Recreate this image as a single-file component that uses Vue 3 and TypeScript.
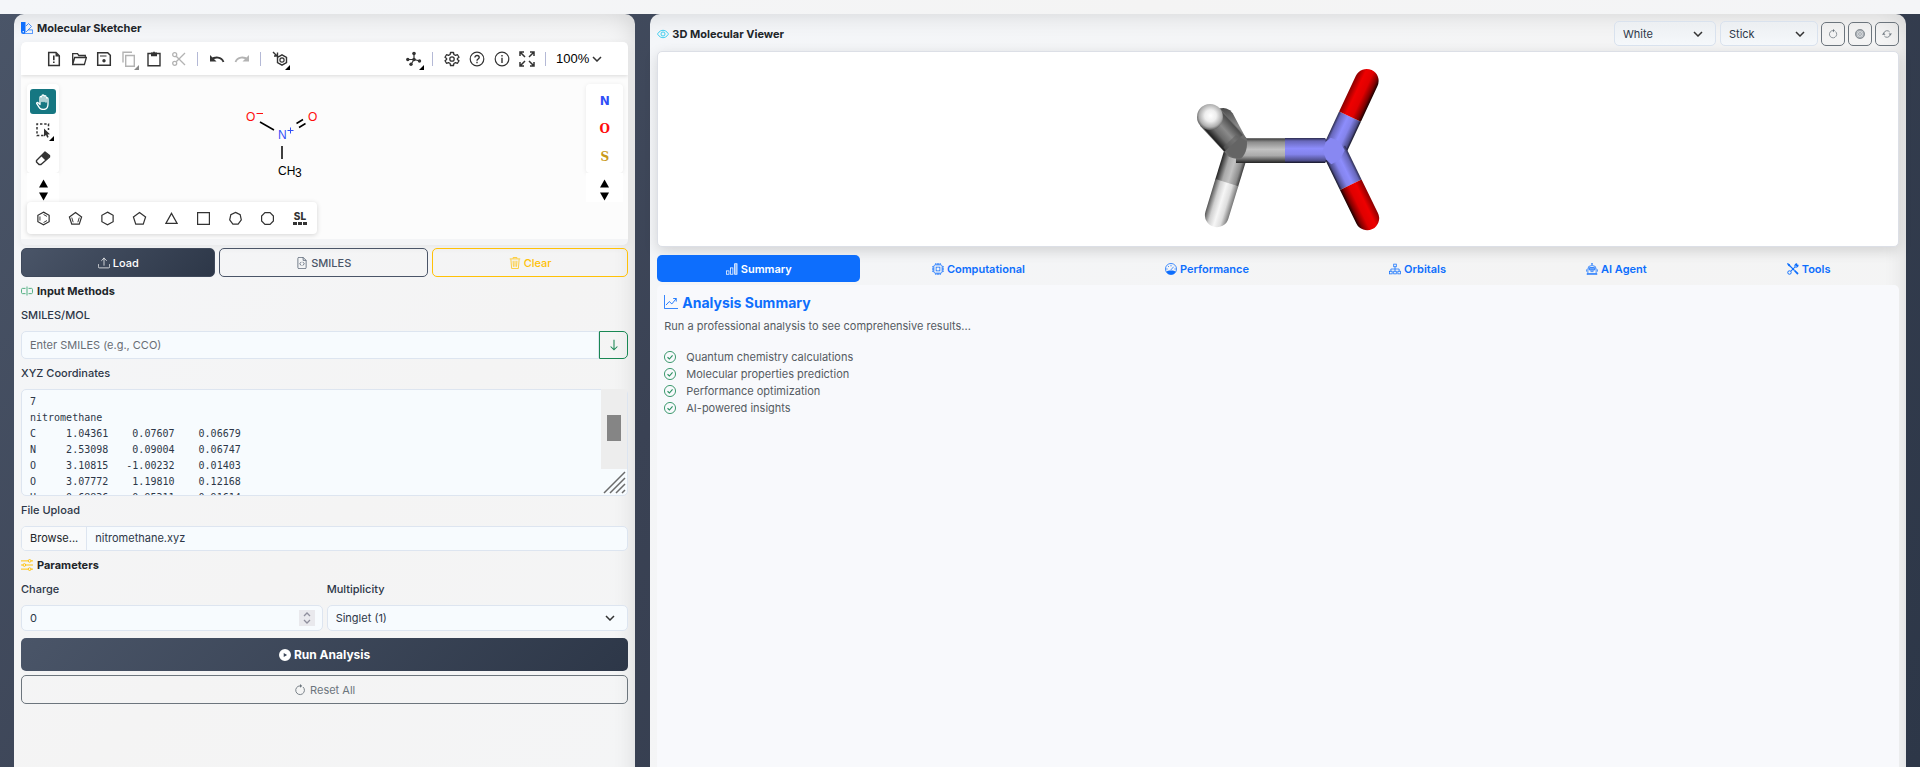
<script setup lang="ts">
import { ref } from 'vue'

const smiles = ref('')
const xyz = ref(
  [
    '7',
    'nitromethane',
    'C     1.04361    0.07607    0.06679',
    'N     2.53098    0.09004    0.06747',
    'O     3.10815   -1.00232    0.01403',
    'O     3.07772    1.19810    0.12168',
    'H     0.68836    0.95311    0.91614',
    'H     0.69211    1.01240   -0.35170',
    'H     0.71002   -0.77120   -0.53060',
  ].join('\n'),
)
const charge = ref(0)
const multiplicity = ref('Singlet (1)')
const background = ref('White')
const display = ref('Stick')
const fileName = ref('nitromethane.xyz')
const activeTab = ref('Summary')

const tabs = [
  { name: 'Summary', icon: 'bars' },
  { name: 'Computational', icon: 'cpu' },
  { name: 'Performance', icon: 'gauge' },
  { name: 'Orbitals', icon: 'tree' },
  { name: 'AI Agent', icon: 'robot' },
  { name: 'Tools', icon: 'tools' },
]
const features = [
  'Quantum chemistry calculations',
  'Molecular properties prediction',
  'Performance optimization',
  'AI-powered insights',
]
const fileTools = [
  { name: 'New', icon: 'k-new' },
  { name: 'Open', icon: 'k-open' },
  { name: 'Save', icon: 'k-save' },
  { name: 'Copy', icon: 'k-copy', dim: true, more: true },
  { name: 'Paste', icon: 'k-paste' },
  { name: 'Cut', icon: 'k-cut', dim: true },
]
const viewTools = [
  { name: 'Settings', icon: 'k-gear' },
  { name: 'Help', icon: 'k-help' },
  { name: 'About', icon: 'k-info' },
  { name: 'Fullscreen', icon: 'k-full' },
]
const rings = [
  { name: 'Benzene', icon: 'r-benzene' },
  { name: 'Cyclopentadiene', icon: 'r-diene' },
  { name: 'Cyclohexane', icon: 'r-hex' },
  { name: 'Cyclopentane', icon: 'r-pent' },
  { name: 'Cyclopropane', icon: 'r-tri' },
  { name: 'Cyclobutane', icon: 'r-square' },
  { name: 'Cycloheptane', icon: 'r-hept' },
  { name: 'Cyclooctane', icon: 'r-oct' },
]
const atoms = ['N', 'O', 'S']

function pickFile(e: Event) {
  const f = (e.target as HTMLInputElement).files?.[0]
  if (f) fileName.value = f.name
}
function resetAll() {
  smiles.value = ''
  charge.value = 0
}
</script>

<template>
  <svg class="sprite" aria-hidden="true">
    <symbol id="palette" viewBox="0 0 16 16"><path fill="currentColor" d="M0 0h6v13a3 3 0 0 1-6 0z" /><path fill="none" stroke="currentColor" d="M6.5 5.5 10 2l4 4-7.5 7.500M9.500 10.500H15.500v5H3.500" /><circle cx="3" cy="13" r="1" fill="#fff" /></symbol>
    <symbol id="upload" viewBox="0 0 16 16"><path fill="none" stroke="currentColor" stroke-linecap="round" d="M.5 10v3a1.500 1.500 0 0 0 1.500 1.500h12a1.500 1.500 0 0 0 1.500-1.500v-3M8 11V1.500M4.800 4.700 8 1.500l3.200 3.200" /></symbol>
    <symbol id="filecode" viewBox="0 0 16 16"><path fill="none" stroke="currentColor" d="M9.500.5H4A1.500 1.500 0 0 0 2.500 2v12A1.500 1.500 0 0 0 4 15.500h8a1.500 1.500 0 0 0 1.500-1.500V4.500zV4.500h4M7 6.500 5 9l2 2.500M9 6.500 11 9l-2 2.500" /></symbol>
    <symbol id="trash" viewBox="0 0 16 16"><path fill="none" stroke="currentColor" d="M1 2.500h14M5.500 2V.7h5V2M2.500 3l1 12.300h9L13.500 3M5.500 5l.4 8M8 5v8M10.500 5l-.4 8" /></symbol>
    <symbol id="cursor" viewBox="0 0 16 16"><path fill="none" stroke="currentColor" stroke-width="1.300" d="M6 4.500H2A1.500 1.500 0 0 0 .7 6v4A1.500 1.500 0 0 0 2 11.500h4M10 4.500h4A1.500 1.500 0 0 1 15.300 6v4a1.500 1.500 0 0 1-1.300 1.500h-4M8 2v12" /></symbol>
    <symbol id="sliders" viewBox="0 0 16 16"><g fill="none" stroke="currentColor" stroke-width="1.300"><circle cx="11.500" cy="2.500" r="1.800" /><circle cx="4.500" cy="8" r="1.800" /><circle cx="11.500" cy="13.500" r="1.800" /><path d="M0 2.500h9.700M13.300 2.500H16M0 8h2.700M6.300 8H16M0 13.500h9.700M13.300 13.500H16" /></g></symbol>
    <symbol id="play" viewBox="0 0 16 16"><path fill="currentColor" fill-rule="evenodd" d="M8 0a8 8 0 1 0 0 16A8 8 0 0 0 8 0M6.300 5.200v5.600L10.800 8z" /></symbol>
    <symbol id="clockwise" viewBox="0 0 16 16"><path fill="none" stroke="currentColor" stroke-width="1.200" d="M12 4A5.800 5.800 0 1 1 8 2.500" /><path fill="currentColor" d="M8 0v5L11 2.500z" /></symbol>
    <symbol id="target" viewBox="0 0 16 16"><circle cx="8" cy="8" r="7.500" fill="currentColor" fill-opacity=".55" /><g fill="none" stroke="currentColor"><circle cx="8" cy="8" r="7.300" /><circle cx="8" cy="8" r="4" stroke="#eef0f2" /><path d="m3 3 10 10M13 3 3 13" stroke="#dfe2e5" stroke-width=".8" /></g></symbol>
    <symbol id="repeat" viewBox="0 0 16 16"><path fill="none" stroke="currentColor" stroke-width="1.300" d="M3 6.500A5.300 5.300 0 0 1 12.300 4.800M13 9.500A5.300 5.300 0 0 1 3.700 11.200" /><path fill="currentColor" d="M10.500 7H16l-2.700 3.500zM5.500 9H0l2.700-3.500z" /></symbol>
    <symbol id="eye" viewBox="0 0 16 16"><g fill="none" stroke="currentColor" stroke-width="1.200"><path d="M.7 8S3.300 3 8 3s7.300 5 7.300 5-2.600 5-7.300 5S.7 8 .7 8z" /><circle cx="8" cy="8" r="2.700" /></g></symbol>
    <symbol id="bars" viewBox="0 0 16 16"><g fill="none" stroke="currentColor"><rect x=".8" y="10.500" width="3.200" height="4.500" /><rect x="6" y="6.500" width="3.200" height="8.500" /><rect x="11.500" y="1" width="3.200" height="14" fill="currentColor" fill-opacity=".5" /></g></symbol>
    <symbol id="cpu" viewBox="0 0 16 16"><g fill="none" stroke="currentColor"><rect x="2.500" y="2.500" width="11" height="11" rx="2" /><rect x="5.500" y="5.500" width="5" height="5" /><path d="M5 0v2.500M7 0v2.500M9 0v2.500M11 0v2.500M5 13.500V16M7 13.500V16M9 13.500V16M11 13.500V16M0 5h2.500M0 7h2.500M0 9h2.500M0 11h2.500M13.500 5H16M13.500 7H16M13.500 9H16M13.500 11H16" /></g></symbol>
    <symbol id="gauge" viewBox="0 0 16 16"><circle cx="8" cy="8" r="7.400" fill="none" stroke="currentColor" /><path fill="currentColor" d="M1.500 11.500C4 9.500 12 9.500 14.500 11.500A7.500 7.500 0 0 1 1.500 11.500z" /><path fill="none" stroke="currentColor" d="M8 2.500v2M3.500 8h-2M14.500 8h-2M4 4l1.300 1.300M7.500 9.500 11.500 5" /></symbol>
    <symbol id="tree" viewBox="0 0 16 16"><g fill="none" stroke="currentColor"><rect x="6.300" y="1.500" width="3.400" height="3.500" /><rect x=".8" y="11" width="3.400" height="3.500" /><rect x="6.300" y="11" width="3.400" height="3.500" /><rect x="11.800" y="11" width="3.400" height="3.500" /><path d="M8 5v6M2.500 11V8h11v3" /></g></symbol>
    <symbol id="robot" viewBox="0 0 16 16"><g fill="none" stroke="currentColor"><path d="M8 3V1M2.500 13.500V8A4.500 4.500 0 0 1 7 3.500h2A4.500 4.500 0 0 1 13.500 8v5.500M.5 8.500v3M15.500 8.500v3M1.500 15.500v-1.500h13v1.500zM6 11.500h4" /><rect x="4" y="6" width="8" height="3.500" rx="1.500" fill="currentColor" fill-opacity=".6" /></g><circle cx="8" cy="1" r="1" fill="currentColor" /></symbol>
    <symbol id="tools" viewBox="0 0 16 16"><path fill="none" stroke="currentColor" stroke-width="1.500" d="M2 2l8 8" /><path fill="currentColor" d="M0 1 1 0l3 2 .3 1.700L3.500 4.500 2 4zM9.300 10.800l1.500-1.500 4.700 4.500-1.700 1.700z" /><path fill="none" stroke="currentColor" stroke-width="1.400" d="M5.200 10.800 11 5M10.800 5.200A2.700 2.700 0 0 1 13.500 1.200M10.800 5.200A2.700 2.700 0 0 0 14.800 2.500M13.500 1.200 12 2.800l1.200 1.200 1.600-1.500" /><circle cx="3.300" cy="12.700" r="2.300" fill="none" stroke="currentColor" stroke-width="1.300" /></symbol>
    <symbol id="graph" viewBox="0 0 16 16"><path fill="none" stroke="currentColor" d="M.5 0v15.500H16M2.300 11.500 6 7.500l3 2.700 5-6.200M10.500 4H14v3.500" /></symbol>
    <symbol id="check" viewBox="0 0 16 16"><circle cx="8" cy="8" r="7.400" fill="none" stroke="currentColor" stroke-width="1.200" /><path fill="none" stroke="currentColor" stroke-width="1.500" d="m4.700 8.300 2.500 2.400 4.200-5" /></symbol>
    <symbol id="down" viewBox="0 0 16 16"><path fill="none" stroke="currentColor" stroke-width="1.400" d="M8 1v13.500M3.500 10 8 14.500 12.500 10" /></symbol>

    <symbol id="k-new" viewBox="0 0 16 16"><path fill="none" stroke="currentColor" stroke-width="1.500" d="M10 1.500H2.700v13h10.600V4.800z" /><path fill="currentColor" d="M9.500 1.500v4h4zM7 4.500h1.600v4.700H7zM7 10.500h1.600v1.600H7z" /></symbol>
    <symbol id="k-open" viewBox="0 0 16 16"><path fill="none" stroke="currentColor" stroke-width="1.300" d="M1.700 13.500V2.700h4.800l1.300 1.800h6.500v2M1.700 13.500 3.700 6.500h11.700l-2 7z" /></symbol>
    <symbol id="k-save" viewBox="0 0 16 16"><path fill="none" stroke="currentColor" stroke-width="1.500" d="M1.700 1.700h10l2.600 2.600v10H1.700z" /><path fill="none" stroke="currentColor" stroke-width="1.200" d="M4 5h6.500" /><circle cx="8" cy="9.700" r="1.700" fill="currentColor" /></symbol>
    <symbol id="k-copy" viewBox="0 0 16 16"><path fill="none" stroke="currentColor" stroke-width="1.400" d="M4.700 4.500h8.600v10.800H4.700zM2 11.500V1.200h9" /></symbol>
    <symbol id="k-paste" viewBox="0 0 16 16"><path fill="none" stroke="currentColor" stroke-width="1.400" d="M2 2.500h12v12.300H2z" /><path fill="currentColor" d="M5 1.500h2L8 .2l1 1.300h2v3.700H5z" /></symbol>
    <symbol id="k-cut" viewBox="0 0 16 16"><g fill="none" stroke="currentColor" stroke-width="1.300"><circle cx="3.700" cy="3.700" r="2" /><circle cx="3.700" cy="12.300" r="2" /><path d="M5.200 5.200 14 14M5.200 10.800 14 2" /></g></symbol>
    <symbol id="k-undo" viewBox="0 0 16 16"><path fill="none" stroke="currentColor" stroke-width="1.800" d="M2 8.500C6 5.500 12.500 5.500 14.500 11" /><path fill="currentColor" d="M1 4v6.500h6.500z" /></symbol>
    <symbol id="k-layout" viewBox="0 0 16 16"><path fill="none" stroke="currentColor" stroke-width="1.400" d="M1 1l4 4M5.500 1.500V5H2M10 3.800l4.500 2.600v5.200L10 14.200l-4.500-2.600V6.400z" /><circle cx="10" cy="9" r="2.100" fill="none" stroke="currentColor" stroke-width="1.200" /></symbol>
    <symbol id="k-mol" viewBox="0 0 16 16"><path fill="none" stroke="currentColor" stroke-width="1.200" d="M8 2v6.500M1.500 8.500H8l6 1.500M8 8.500l-3 5" /><g fill="currentColor"><circle cx="8" cy="2.500" r="1.800" /><circle cx="8" cy="8.500" r="1.800" /><circle cx="1.800" cy="8.500" r="1.700" /><circle cx="13.500" cy="10" r="1.700" /><circle cx="5" cy="13.300" r="1.700" /></g></symbol>
    <symbol id="k-gear" viewBox="0 0 16 16"><path fill="none" stroke="currentColor" stroke-width="1.300" stroke-linejoin="round" d="M6.500 1.500h3l.4 2 1.600.9 2-.7 1.500 2.600L13.400 7.600v.8l1.600 1.300-1.500 2.600-2-.7-1.600.9-.4 2h-3l-.4-2-1.600-.9-2 .7L1 9.700l1.600-1.300v-.8L1 6.300l1.500-2.600 2 .7 1.600-.9z" /><circle cx="8" cy="8" r="2.200" fill="none" stroke="currentColor" stroke-width="1.300" /></symbol>
    <symbol id="k-help" viewBox="0 0 16 16"><circle cx="8" cy="8" r="6.800" fill="none" stroke="currentColor" stroke-width="1.200" /><path fill="none" stroke="currentColor" stroke-width="1.400" d="M5.900 6.500C5.900 3.800 10.200 4 10.200 6.400 10.200 8 8 8 8 9.700M8 10.800v1.500" /></symbol>
    <symbol id="k-info" viewBox="0 0 16 16"><circle cx="8" cy="8" r="6.800" fill="none" stroke="currentColor" stroke-width="1.200" /><path stroke="currentColor" stroke-width="1.400" d="M8 6.700V12M8 4v1.500" /></symbol>
    <symbol id="k-full" viewBox="0 0 16 16"><path fill="none" stroke="currentColor" stroke-width="1.500" d="M1 5V1h4M1 1l5 5M11 1h4v4M15 1l-5 5M1 11v4h4M1 15l5-5M15 11v4h-4M15 15l-5-5" /></symbol>
    <symbol id="k-hand" viewBox="0 0 16 16"><path fill="none" stroke="currentColor" stroke-width="1.300" stroke-linejoin="round" stroke-linecap="round" d="M5 9V3.500a1 1 0 0 1 2 0V7.500 2a1 1 0 0 1 2 0v5.500V2.700a1 1 0 0 1 2 0V8 4.700a1 1 0 0 1 2 0V10c0 3.500-2 5.500-4.700 5.500-3 0-4-1.500-6.500-5.800-.5-1 .8-1.600 1.500-.8L5 10.500z" /></symbol>
    <symbol id="k-select" viewBox="0 0 16 16"><path fill="none" stroke="currentColor" stroke-width="1.500" stroke-dasharray="2.400 1.800" d="M8.500 13.500h-6.500V2h11.500v6" /><path fill="currentColor" d="M9 6.500v8l2-1.500 1.200 2.800 1.500-.7-1.200-2.600 2.500-.3z" /></symbol>
    <symbol id="k-erase" viewBox="0 0 16 16"><path fill="none" stroke="currentColor" stroke-width="1.400" stroke-linejoin="round" d="M1.500 10.500 10 2l4.500 3.500v1.500L6 14.500H4L1.500 12z" /><path fill="currentColor" d="M6 6 10 2l4.700 4-4.200 4.500z" /></symbol>
    <symbol id="r-benzene" viewBox="0 0 16 16"><path fill="none" stroke="currentColor" stroke-width="1.300" d="M8 1.200 14 4.600v6.800L8 14.800 2 11.400V4.600z" /><path fill="none" stroke="currentColor" d="M8 3.700 11.700 5.800M11.700 10.200 8 12.300M4.200 5.800v4.400" /></symbol>
    <symbol id="r-diene" viewBox="0 0 16 16"><path fill="none" stroke="currentColor" stroke-width="1.300" d="M8 1.500 14.500 6.300 12 14H4L1.500 6.300z" /><path fill="none" stroke="currentColor" d="M4 7l1.500 5M12 7l-1.500 5" /></symbol>
    <symbol id="r-hex" viewBox="0 0 16 16"><path fill="none" stroke="currentColor" stroke-width="1.300" d="M8 1.200 14 4.600v6.800L8 14.800 2 11.400V4.600z" /></symbol>
    <symbol id="r-pent" viewBox="0 0 16 16"><path fill="none" stroke="currentColor" stroke-width="1.300" d="M8 1.500 14.500 6.300 12 14H4L1.500 6.300z" /></symbol>
    <symbol id="r-tri" viewBox="0 0 16 16"><path fill="none" stroke="currentColor" stroke-width="1.300" d="M8 2.500 14 13.300H2z" /></symbol>
    <symbol id="r-square" viewBox="0 0 16 16"><path fill="none" stroke="currentColor" stroke-width="1.300" d="M1.700 1.700h12.600v12.600H1.700z" /></symbol>
    <symbol id="r-hept" viewBox="0 0 16 16"><path fill="none" stroke="currentColor" stroke-width="1.300" d="M8 1.500 13 4l1.200 5.400L10.800 14H5.200L1.800 9.400 3 4z" /></symbol>
    <symbol id="r-oct" viewBox="0 0 16 16"><path fill="none" stroke="currentColor" stroke-width="1.300" d="M5.300 1.700h5.400l3.600 3.600v5.400l-3.600 3.600H5.300l-3.600-3.600V5.300z" /></symbol>
  </svg>

  <div class="page">
    <div class="topbar"></div>
    <main class="workspace">
      <section class="panel left">
        <h2 class="title"><svg class="ic blue"><use href="#palette" /></svg>Molecular Sketcher</h2>

        <div class="editor">
          <div class="toolbar">
            <div class="group">
              <button v-for="t in fileTools" :key="t.name" class="tool" :class="{ dim: t.dim, more: t.more }" :aria-label="t.name">
                <svg class="k"><use :href="'#' + t.icon" /></svg>
              </button>
              <i class="sep"></i>
              <button class="tool" aria-label="Undo"><svg class="k"><use href="#k-undo" /></svg></button>
              <button class="tool dim" aria-label="Redo"><svg class="k flip"><use href="#k-undo" /></svg></button>
              <i class="sep"></i>
              <button class="tool more" aria-label="Layout"><svg class="k"><use href="#k-layout" /></svg></button>
            </div>
            <div class="group">
              <button class="tool more" aria-label="3D viewer"><svg class="k"><use href="#k-mol" /></svg></button>
              <i class="sep"></i>
              <button v-for="t in viewTools" :key="t.name" class="tool" :aria-label="t.name">
                <svg class="k"><use :href="'#' + t.icon" /></svg>
              </button>
              <i class="sep"></i>
              <button class="zoom">100%<svg class="caret" viewBox="0 0 10 6"><path d="m1 1 4 4 4-4" /></svg></button>
            </div>
          </div>

          <div class="canvas">
            <div class="side">
              <div class="rail">
                <button class="mode on" aria-label="Hand"><svg class="k"><use href="#k-hand" /></svg></button>
                <button class="mode more" aria-label="Select"><svg class="k"><use href="#k-select" /></svg></button>
                <button class="mode" aria-label="Erase"><svg class="k"><use href="#k-erase" /></svg></button>
              </div>
              <div class="arrows">
                <button aria-label="Scroll tools up"><svg viewBox="0 0 10 9"><path d="M5 0l5 9H0z" /></svg></button>
                <button aria-label="Scroll tools down"><svg viewBox="0 0 10 9"><path d="M5 9l5-9H0z" /></svg></button>
              </div>
            </div>
            <svg class="formula" viewBox="240 105 90 80" role="img" aria-label="Nitromethane structure">
              <path d="M260 122l14 8M296.500 123.500l6.500-4M299 127.500l6.500-4M282 146v13" />
              <text x="246" y="121" class="o">O</text>
              <path class="om" d="M256.500 113.500h6.500" />
              <text x="308" y="121" class="o">O</text>
              <text x="278" y="139" class="n">N</text>
              <path class="nm" d="M287.500 130.500h6M290.500 127.500v6" />
              <text x="278" y="175">CH</text><text x="295" y="177">3</text>
            </svg>
            <div class="side">
              <div class="rail atoms">
                <button v-for="a in atoms" :key="a" class="atom" :class="a">{{ a }}</button>
              </div>
              <div class="arrows">
                <button aria-label="Scroll atoms up"><svg viewBox="0 0 10 9"><path d="M5 0l5 9H0z" /></svg></button>
                <button aria-label="Scroll atoms down"><svg viewBox="0 0 10 9"><path d="M5 9l5-9H0z" /></svg></button>
              </div>
            </div>
            <div class="rings">
              <button v-for="r in rings" :key="r.name" :aria-label="r.name"><svg class="k"><use :href="'#' + r.icon" /></svg></button>
              <button class="sl">SL<i></i></button>
            </div>
          </div>
        </div>

        <div class="actions">
          <button class="btn dark"><svg class="ic"><use href="#upload" /></svg>Load</button>
          <button class="btn slate"><svg class="ic"><use href="#filecode" /></svg>SMILES</button>
          <button class="btn amber"><svg class="ic"><use href="#trash" /></svg>Clear</button>
        </div>

        <h2 class="title"><svg class="ic green"><use href="#cursor" /></svg>Input Methods</h2>

        <label class="label" for="smiles">SMILES/MOL</label>
        <div class="row field">
          <input id="smiles" v-model="smiles" class="control joined" type="text" placeholder="Enter SMILES (e.g., CCO)" />
          <button class="go" aria-label="Load SMILES"><svg class="ic"><use href="#down" /></svg></button>
        </div>

        <label class="label" for="xyz">XYZ Coordinates</label>
        <div class="area field">
          <textarea id="xyz" v-model="xyz" spellcheck="false"></textarea>
          <div class="bar"><i></i></div>
          <svg class="grip" viewBox="0 0 26 26"><path d="M3 24 24 3M9 24 24 9M15 24l9-9M21 24l3-3" /></svg>
        </div>

        <label class="label" for="file">File Upload</label>
        <label class="file"><span class="browse">Browse...</span><span>{{ fileName }}</span><input id="file" type="file" @change="pickFile" /></label>

        <h2 class="title"><svg class="ic yellow"><use href="#sliders" /></svg>Parameters</h2>

        <div class="params">
          <div>
            <label class="label" for="charge">Charge</label>
            <div class="numeric">
              <input id="charge" v-model="charge" class="control" type="number" />
              <svg class="spin" viewBox="0 0 16 16"><path d="M5 6l3-3 3 3M5 10l3 3 3-3" /></svg>
            </div>
          </div>
          <div>
            <label class="label" for="mult">Multiplicity</label>
            <div class="select">
              <select id="mult" v-model="multiplicity" class="control">
                <option>Singlet (1)</option><option>Doublet (2)</option><option>Triplet (3)</option>
              </select>
              <svg class="caret" viewBox="0 0 10 6"><path d="m1 1 4 4 4-4" /></svg>
            </div>
          </div>
        </div>

        <button class="btn dark run"><svg class="ic"><use href="#play" /></svg>Run Analysis</button>
        <button class="btn gray" @click="resetAll"><svg class="ic"><use href="#clockwise" /></svg>Reset All</button>
      </section>

      <section class="panel right">
        <header class="head">
          <h2 class="title"><svg class="ic cyan"><use href="#eye" /></svg>3D Molecular Viewer</h2>
          <div class="controls">
            <div class="select bg">
              <select v-model="background" class="control" aria-label="Background"><option>White</option><option>Black</option></select>
              <svg class="caret" viewBox="0 0 10 6"><path d="m1 1 4 4 4-4" /></svg>
            </div>
            <div class="select style">
              <select v-model="display" class="control" aria-label="Style"><option>Stick</option><option>Sphere</option></select>
              <svg class="caret" viewBox="0 0 10 6"><path d="m1 1 4 4 4-4" /></svg>
            </div>
            <button class="square" aria-label="Reset view"><svg><use href="#clockwise" /></svg></button>
            <button class="square" aria-label="Surface"><svg><use href="#target" /></svg></button>
            <button class="square" aria-label="Spin"><svg><use href="#repeat" /></svg></button>
          </div>
        </header>

        <div class="viewer">
          <svg class="model" viewBox="-36 33 780 588" role="img" aria-label="3D model of nitromethane">
            <defs>
              <linearGradient id="gb" x2="0" y2="1"><stop offset="0" stop-color="#2c2c50" /><stop offset=".12" stop-color="#6868bb" /><stop offset=".42" stop-color="#8d8dfc" /><stop offset=".65" stop-color="#8484ec" /><stop offset=".9" stop-color="#4e4e8c" /><stop offset="1" stop-color="#141424" /></linearGradient>
              <linearGradient id="gr" x2="0" y2="1"><stop offset="0" stop-color="#8a0000" /><stop offset=".3" stop-color="#ee0000" /><stop offset=".6" stop-color="#e00000" /><stop offset=".85" stop-color="#800000" /><stop offset="1" stop-color="#180000" /></linearGradient>
              <linearGradient id="gc" x2="0" y2="1"><stop offset="0" stop-color="#3c3c3c" /><stop offset=".15" stop-color="#8c8c8c" /><stop offset=".45" stop-color="#c2c2c2" /><stop offset=".7" stop-color="#aaa" /><stop offset="1" stop-color="#222" /></linearGradient>
              <linearGradient id="gd" x2="0" y2="1"><stop offset="0" stop-color="#4a4a4a" /><stop offset=".4" stop-color="#8a8a8a" /><stop offset=".7" stop-color="#6c6c6c" /><stop offset="1" stop-color="#1a1a1a" /></linearGradient>
              <linearGradient id="gw" x2="0" y2="1"><stop offset="0" stop-color="#777" /><stop offset=".25" stop-color="#ddd" /><stop offset=".5" stop-color="#f6f6f6" /><stop offset=".75" stop-color="#d0d0d0" /><stop offset="1" stop-color="#555" /></linearGradient>
              <radialGradient id="gh" cx=".52" cy=".45" r=".56"><stop offset="0" stop-color="#fff" /><stop offset=".4" stop-color="#eee" /><stop offset=".78" stop-color="#b0b0b0" /><stop offset="1" stop-color="#555" /></radialGradient>
            </defs>
            <path d="M175 205a32 32 0 0 1 43 12l44 82-30 40z" fill="url(#gd)" />
            <g transform="translate(228 335) rotate(107)"><rect y="-36" width="96" height="72" fill="url(#gc)" /><path d="M94-36h102a36 36 0 0 1 0 72H94z" fill="url(#gw)" /></g>
            <path d="M228 292h147v74H228z" fill="url(#gc)" />
            <path d="M375 291h120l30 37-30 38H375z" fill="url(#gb)" />
            <g transform="translate(521 332) rotate(-65)"><path d="M18-36h98v72H4z" fill="url(#gb)" /><path d="M116-36h118a36 36 0 0 1 0 72H116z" fill="url(#gr)" /></g>
            <g transform="translate(521 326) rotate(64)"><path d="M4-36h113v72H18z" fill="url(#gb)" /><path d="M117-36h112a36 36 0 0 1 0 72H117z" fill="url(#gr)" /></g>
            <path d="M497 303 512 290 538 300 554 328 540 356 514 370 499 356 488 329z" fill="#8888f2" />
            <path d="M120 254 180 202l80 90c4 24-2 46-17 60-14 3-28 0-38-6z" fill="#6c6c6c" />
            <g transform="translate(150 228) rotate(48)"><path d="M0-37h106v74H0z" fill="url(#gd)" /></g>
            <path d="M190 318l38-36 32 18c1 24-4 42-17 52-18 2-36-4-53-34z" fill="#5e5e5e" fill-opacity=".55" />
            <circle cx="150" cy="228" r="39" fill="url(#gh)" />
          </svg>
        </div>

        <nav class="tabs" role="tablist">
          <button v-for="t in tabs" :key="t.name" class="tab" :class="{ active: t.name === activeTab }" role="tab" :aria-selected="t.name === activeTab" @click="activeTab = t.name">
            <svg class="ic"><use :href="'#' + t.icon" /></svg>{{ t.name }}
          </button>
        </nav>

        <div class="content">
          <h3><svg><use href="#graph" /></svg>Analysis Summary</h3>
          <p>Run a professional analysis to see comprehensive results...</p>
          <ul>
            <li v-for="f in features" :key="f"><svg class="ic"><use href="#check" /></svg>{{ f }}</li>
          </ul>
        </div>
      </section>
    </main>
  </div>
</template>

<style>
body { margin: 0; font-family: Inter, "Liberation Sans", sans-serif; }
</style>

<style scoped>
* { box-sizing: border-box; }
button, input, select, textarea { font: inherit; color: inherit; margin: 0; }
button { border: 0; padding: 0; background: none; cursor: pointer; display: flex; align-items: center; justify-content: center; }
h2, h3, p, ul { margin: 0; padding: 0; }
svg { display: block; flex: none; }
.sprite { display: none; }

.page { min-height: 100vh; display: flex; flex-direction: column; font-size: 11px; color: #2d3748; background: linear-gradient(135deg, #4a5568, #3a4254 40%, #2d3748); }
.topbar { height: 14px; background: linear-gradient(90deg, #f4f6f9, #f4f4f4 60%, #f4f5f7); }
.workspace { flex: 1; display: grid; grid-template-columns: minmax(0, 331fr) minmax(0, 669fr); gap: 15px; padding: 0 14px; }
.panel { display: flex; flex-direction: column; padding: 0 7px; border-radius: 10px 10px 0 0; background: linear-gradient(135deg, #f4f6f9, #f4f4f4 60%, #f4f5f6); box-shadow: inset -12px 14px 24px -14px rgba(0, 0, 0, .14); }

.title { display: flex; align-items: center; gap: 4px; height: 28px; font-size: 11px; font-weight: 700; color: #212529; }
.ic { width: 12px; height: 12px; }
.blue { color: #0d6efd; }
.green { color: #4fae80; }
.yellow { color: #ffc107; }
.cyan { color: #2cc9ee; }

.editor { border-radius: 5px; overflow: hidden; background: #f3f4f6; padding-bottom: 6px; box-shadow: 0 2px 8px rgba(0, 0, 0, .06); }
.toolbar { position: relative; display: flex; justify-content: space-between; height: 33px; padding: 0 26px 0 20px; background: #fff; box-shadow: 0 1px 4px rgba(0, 0, 0, .14); color: #333; }
.group { display: flex; align-items: center; }
.tool { position: relative; width: 25px; height: 24px; }
.k { width: 16px; height: 16px; }
.flip { transform: scaleX(-1); }
.dim { color: #b3b3b3; }
.more::after { content: ""; position: absolute; right: 2px; bottom: 1px; border-left: 5px solid transparent; border-bottom: 5px solid #000; }
.dim.more::after { border-bottom-color: #888; }
.sep { width: 1px; height: 14px; margin: 0 6px; background: #b4b9d6; }
.zoom { gap: 3px; margin-left: 4px; font: 13px "Liberation Sans", Arial, sans-serif; color: #000; }
.caret { width: 10px; height: 6px; fill: none; stroke: #333; stroke-width: 1.500; }

.canvas { display: grid; grid-template-columns: auto 1fr auto; padding: 9px 5px 5px 6px; background: #fcfcfc; }
.rail { width: 32px; height: 89px; padding: 5px 3px; border-radius: 4px; background: #fff; box-shadow: 0 1px 5px rgba(0, 0, 0, .08); }
.atoms { width: 37px; padding: 3px; }
.mode { position: relative; width: 26px; height: 25px; margin-bottom: 3px; border-radius: 3px; color: #333; }
.on { background: #167782; color: #fff; }
.arrows { position: relative; display: flex; flex-direction: column; align-items: center; gap: 4px; height: 29px; padding-top: 6px; background: #fff; }
.arrows button, .arrows svg { width: 9px; height: 9px; }
.atom { width: 31px; height: 28px; font: bold 12px "DejaVu Serif", "DejaVu Sans", serif; }
.N { color: #304ff7; font-family: "DejaVu Sans", sans-serif; }
.O { color: #ff0d0d; }
.S { color: #c99a19; }
.formula { width: 90px; height: 80px; margin: 21px 0 0 181px; font: 12px "Liberation Sans", Arial, sans-serif; }
.formula path { fill: none; stroke: #000; stroke-width: 1.500; }
.formula .om { stroke: #ff0d0d; stroke-width: 1; }
.formula .nm { stroke: #304ff7; stroke-width: 1; }
.formula .o { fill: #ff0d0d; }
.formula .n { fill: #304ff7; }
.rings { grid-column: 1 / -1; justify-self: start; position: relative; display: flex; height: 32px; border-radius: 4px; background: #fff; color: #333; box-shadow: 0 1px 5px rgba(0, 0, 0, .16); }
.rings button { width: 32px; }
.rings .k { width: 15px; height: 15px; }
.rings .sl { flex-direction: column; font-size: 10px; line-height: 9px; font-weight: 800; width: 34px; }
.sl i { width: 14px; height: 3px; margin-top: 1px; background: repeating-linear-gradient(90deg, #333 0 4px, transparent 4px 5px); }

.actions { display: flex; gap: 4px; margin-top: 3px; }
.btn { gap: 3px; height: 29px; border: 1px solid; border-radius: 5px; font-weight: 500; }
.actions .btn { flex: 1 1 auto; }
.dark { background: linear-gradient(135deg, #4a5568, #2d3748); border-color: #3f495b; color: #fff; }
.slate { color: #4a5568; border-color: #4a5568; }
.amber { color: #ffc107; }
.run { height: 33px; margin: 7px 0 4px; border: 0; font-size: 12px; font-weight: 700; }
.gray { gap: 4px; color: #6c757d; font-weight: 400; }

.label { display: block; height: 20px; line-height: 20px; margin-bottom: 6px; font-weight: 500; }
.field { margin-bottom: 4px; }
.row { display: flex; }
.control { width: 100%; height: 26px; padding: 0 8px; border: 1px solid #dde5f0; border-radius: 5px; background: #f7fbfe; outline: 0; appearance: none; }
.joined { height: 28px; border-radius: 5px 0 0 5px; }
.control::placeholder { color: #686d74; }
.go { width: 29px; height: 28px; flex: none; border: 1px solid #198754; border-radius: 0 5px 5px 0; color: #198754; }
.area { position: relative; height: 107px; }
textarea { display: block; width: 100%; height: 100%; padding: 4px 8px; border: 1px solid #dde5f0; border-radius: 5px; background: #f7fbfe; font: 10px/16px "DejaVu Sans Mono", "Liberation Mono", monospace; resize: none; overflow: hidden; outline: 0; }
.bar { position: absolute; top: 0; right: 1px; width: 26px; height: 80px; padding: 26px 6px 0; background: #ededed; }
.bar i { display: block; height: 26px; background: #858585; }
.grip { position: absolute; right: 1px; bottom: 1px; width: 26px; height: 26px; fill: none; stroke: #6b6b6b; stroke-width: 1.500; }
.file { display: flex; align-items: center; height: 25px; border: 1px solid #dde5f0; border-radius: 5px; background: #f7fbfe; overflow: hidden; cursor: pointer; }
.file span { padding: 0 8px; line-height: 23px; }
.file .browse { border-right: 1px solid #dde5f0; background: #f9fafb; color: #212529; }
.file input { width: 1px; height: 1px; opacity: 0; }
.params { display: grid; grid-template-columns: 1fr 1fr; gap: 4px; }
.numeric, .select { position: relative; }
.numeric .control::-webkit-inner-spin-button { display: none; }
.spin { position: absolute; right: 8px; top: 5px; width: 16px; height: 16px; background: #e9e9ed; fill: none; stroke: #8f8f9d; stroke-width: 1.300; }
.select .caret { position: absolute; right: 13px; top: 10px; pointer-events: none; }

.head { display: flex; justify-content: space-between; align-items: center; height: 37px; padding-top: 2px; }
.head .title { gap: 3px; }
.controls { display: flex; align-items: center; gap: 3px; }
.controls .control { height: 25px; background: linear-gradient(#eceff2, #f5f8fb); border-color: #d9e2ee; }
.bg { width: 102px; margin-right: 1px; }
.style { width: 98px; }
.square { width: 24px; height: 24px; border: 1px solid #6c757d; border-radius: 5px; color: #6c757d; }
.square svg { width: 10px; height: 10px; }
.viewer { display: flex; justify-content: center; height: 196px; border: 1px solid #dcdfe6; border-radius: 5px; background: #fff; box-shadow: 0 4px 14px rgba(0, 0, 0, .14); }
.model { width: 260px; height: 196px; }
.tabs { display: flex; gap: 3px; margin-top: 8px; }
.tab { flex: 1 1 auto; height: 27px; gap: 3px; border-radius: 5px; font-weight: 600; color: #0d6efd; }
.active { background: #0d6efd; color: #fff; }
.content { flex: 1; margin-top: 3px; padding: 3px 7px; border-radius: 5px 5px 0 0; background: #f8f9fc; color: #555b62; }
.content h3 { display: flex; align-items: center; gap: 4px; height: 28px; font-size: 14px; font-weight: 700; color: #0d6efd; }
.content h3 svg { width: 14px; height: 14px; }
.content p { height: 20px; line-height: 20px; margin-bottom: 12px; }
.content ul { list-style: none; }
.content li { display: flex; align-items: center; gap: 10px; height: 17px; }
.content li .ic { color: #2a9060; }
</style>
